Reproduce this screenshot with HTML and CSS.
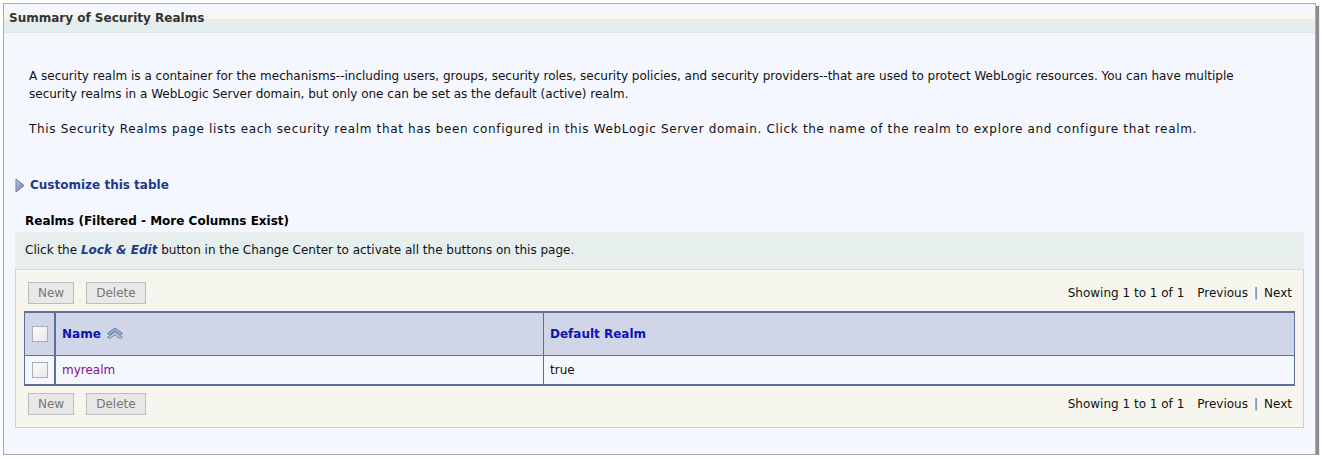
FILE: index.html
```html
<!DOCTYPE html>
<html>
<head>
<meta charset="utf-8">
<link rel="stylesheet" href="styles.css">
</head>
<body>
<div class="panel">
  <div class="panel-header"><h1 class="title">Summary of Security Realms</h1></div>
  <div class="intro">
    <p>A security realm is a container for the mechanisms--including users, groups, security roles, security policies, and security providers--that are used to protect WebLogic resources. You can have multiple security realms in a WebLogic Server domain, but only one can be set as the default (active) realm.</p>
    <p class="wide">This Security Realms page lists each security realm that has been configured in this WebLogic Server domain. Click the name of the realm to explore and configure that realm.</p>
  </div>
  <div class="customize">
    <svg class="disclose" width="10" height="15" viewBox="0 0 10 15"><defs><linearGradient id="g1" x1="0" y1="0" x2="1" y2="1"><stop offset="0" stop-color="#c8d2ea"/><stop offset="1" stop-color="#5a6ea8"/></linearGradient></defs><path d="M1 1 L9 7.5 L1 14 Z" fill="url(#g1)" stroke="#6a7aa8" stroke-width="1" stroke-linejoin="round"/></svg>
    <span class="customize-link">Customize this table</span>
  </div>
  <div class="section">
    <div class="section-title">Realms (Filtered - More Columns Exist)</div>
    <div class="info">Click the <b><i>Lock &amp; Edit</i></b> button in the Change Center to activate all the buttons on this page.</div>
    <div class="tablebox">
      <div class="controls">
        <div class="buttons"><span class="btn">New</span><span class="btn">Delete</span></div>
        <div class="pager">Showing 1 to 1 of 1<span class="prev">Previous</span><span class="sep">|</span><span>Next</span></div>
      </div>
      <table class="grid">
        <thead>
          <tr>
            <th class="cb"><span class="check"></span></th>
            <th class="name">Name <svg class="sort" width="18" height="12" viewBox="0 0 18 12"><path d="M1.5 6.5 L9 1 L16.5 6.5 L14.3 8 L9 4.2 L3.7 8 Z" fill="#9fb1cc" stroke="#56709a" stroke-width="0.9" stroke-linejoin="round"/><path d="M1.5 10.2 L9 4.8 L16.5 10.2 L14.3 11.6 L9 8 L3.7 11.6 Z" fill="#b8c6dc" stroke="#6883aa" stroke-width="0.9" stroke-linejoin="round"/></svg></th>
            <th class="def">Default Realm</th>
          </tr>
        </thead>
        <tbody>
          <tr>
            <td class="cb"><span class="check"></span></td>
            <td><span class="realm">myrealm</span></td>
            <td>true</td>
          </tr>
        </tbody>
      </table>
      <div class="controls bottom">
        <div class="buttons"><span class="btn">New</span><span class="btn">Delete</span></div>
        <div class="pager">Showing 1 to 1 of 1<span class="prev">Previous</span><span class="sep">|</span><span>Next</span></div>
      </div>
    </div>
  </div>
</div>
</body>
</html>
```
FILE: styles.css
```css
html, body { margin: 0; padding: 0; background: #ffffff; }
body {
  font-family: "DejaVu Sans", sans-serif;
  font-size: 12px;
  color: #111;
}
.panel {
  margin: 3px 0 0 3px;
  width: 1311px;
  height: 450px;
  border: 1px solid #a9a9b9;
  background: #f5f7ff;
  box-shadow: 3px 3px 1px #8c8c94;
}
.panel-header {
  margin-top: 9px;
  height: 19px;
  background: linear-gradient(#f7f7ee 0, #f7f7ee 6px, #e5eeee 6px, #e5eeee 100%);
  border-bottom: 1px solid #dfe6e6;
}
.title {
  margin: 0;
  padding-left: 5px;
  font-size: 12px;
  font-weight: bold;
  color: #333;
  line-height: 19px;
  position: relative;
  top: -4px;
}
.intro { padding: 34px 40px 0 25px; }
.intro p { margin: 0 0 17px 0; line-height: 18px; }
.intro p.wide { letter-spacing: 0.66px; }
.customize {
  display: flex;
  align-items: center;
  gap: 5px;
  margin: 38px 0 0 11px;
  height: 18px;
}
.customize-link { font-weight: bold; font-size: 12px; color: #1c3a8c; }
.section { margin: 18px 11px 0 11px; }
.section-title { font-weight: bold; line-height: 18px; padding-left: 10px; color: #000; }
.info {
  margin-top: 2px;
  height: 37px;
  line-height: 37px;
  background: #e6eeee;
  padding-left: 10px;
}
.info i { color: #1c3a8c; }
.tablebox {
  background: #f6f6ee;
  border: 1px solid #cfcfcf;
  border-top: 1px solid #d8dcdc;
  padding: 12px 8px 12px 8px;
}
.controls {
  display: flex;
  justify-content: space-between;
  align-items: center;
  height: 22px;
  padding-left: 4px;
  padding-right: 3px;
}
.controls.bottom { margin-top: 7px; }
.buttons { display: flex; gap: 12px; }
.btn {
  display: inline-block;
  height: 20px;
  line-height: 20px;
  padding: 0 9px;
  border: 1px solid #bcbcbc;
  background: #e8e8e8;
  color: #777;
}
.pager { display: flex; align-items: center; color: #111; }
.prev { margin-left: 13px; }
.sep { margin: 0 6px; color: #555; }
.grid {
  width: 100%;
  margin-top: 7px;
  border-collapse: collapse;
  border: 2px solid #5d7095;
  border-left-width: 1px;
  border-right-width: 1px;
}
.grid th {
  height: 42px;
  background: #d0d6e7;
  text-align: left;
  font-weight: bold;
  color: #0a14b4;
  padding: 0 6px;
  border: 1px solid #5d7095;
  border-top: 1px solid #fff;
}
.grid th.cb, .grid td.cb { width: 16px; padding: 0 6px 0 7px; border-right: 2px solid #5d7095; }
.grid th.name { width: 475px; }
.grid td {
  height: 28px;
  background: #f5f7ff;
  padding: 0 6px;
  border: 1px solid #5d7095;
}
.check {
  display: block;
  width: 14px;
  height: 14px;
  border: 1px solid #a8b0b8;
  background: linear-gradient(135deg, #fafafa, #eaeaea);
}
.sort { vertical-align: -1px; margin-left: 1px; }
.realm { color: #8a0c8a; }
```
